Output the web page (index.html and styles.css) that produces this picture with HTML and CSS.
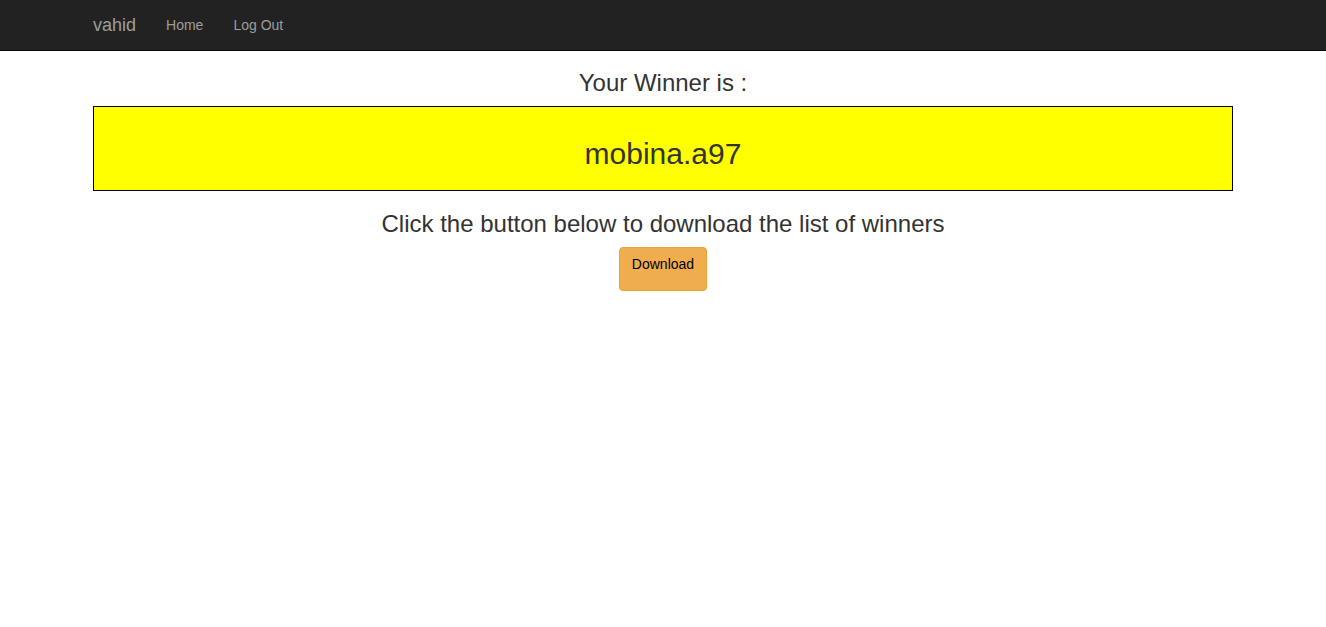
FILE: index.html
```html
<!DOCTYPE html>
<html>
<head>
<meta charset="utf-8">
<link rel="stylesheet" href="styles.css">
</head>
<body>
<nav class="navbar">
  <div class="container nav-inner">
    <a class="brand" href="#">vahid</a>
    <a class="nav-link" href="#">Home</a>
    <a class="nav-link" href="#">Log Out</a>
  </div>
</nav>
<main class="container content">
  <h3 class="heading">Your Winner is :</h3>
  <div class="winner-box">
    <h2 class="winner">mobina.a97</h2>
  </div>
  <h3 class="heading heading-two">Click the button below to download the list of winners</h3>
  <button class="btn-download">Download</button>
</main>
</body>
</html>
```
FILE: styles.css
```css
* { box-sizing: border-box; }
html, body { margin: 0; padding: 0; }
body {
  font-family: "Liberation Sans", Arial, sans-serif;
  font-size: 14px;
  line-height: 1.42857;
  color: #333;
  background: #fff;
}
.container {
  width: 1170px;
  margin: 0 auto;
  padding: 0 15px;
}
.navbar {
  background: #222;
  border-bottom: 1px solid #080808;
  height: 51px;
}
.nav-inner {
  display: flex;
  align-items: center;
  height: 50px;
}
.brand {
  color: #9d9d9d;
  font-size: 18px;
  line-height: 20px;
  padding: 15px 15px 15px 0;
  text-decoration: none;
}
.nav-link {
  color: #9d9d9d;
  font-size: 14px;
  line-height: 20px;
  padding: 15px;
  text-decoration: none;
}
.content {
  display: flex;
  flex-direction: column;
  align-items: center;
}
.heading {
  font-size: 24px;
  font-weight: 400;
  line-height: 1.1;
  margin: 19px 0 10px;
  text-align: center;
  color: #333;
}
.heading-two { margin-top: 20px; margin-bottom: 9px; }
.winner-box {
  width: 100%;
  background: #ff0;
  border: 1px solid #000;
  padding: 30px 0 20px;
  text-align: center;
}
.winner {
  margin: 0;
  font-size: 30px;
  font-weight: 400;
  line-height: 33px;
  color: #333;
}
.btn-download {
  font-family: "Liberation Sans", Arial, sans-serif;
  font-size: 14px;
  line-height: 20px;
  color: #000;
  background: #f0ad4e;
  border: 1px solid #eea236;
  border-radius: 4px;
  padding: 6px 12px 16px;
  cursor: pointer;
}
```
